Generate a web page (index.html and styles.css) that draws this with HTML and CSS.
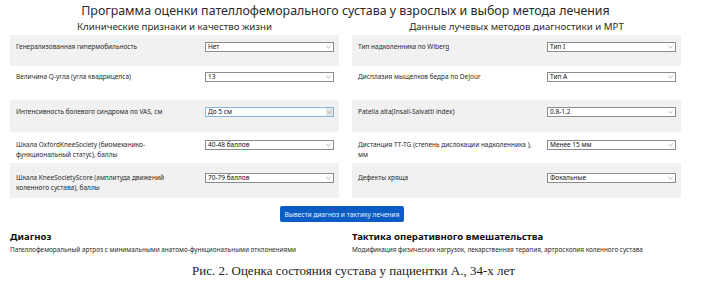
FILE: index.html
```html
<!DOCTYPE html>
<html lang="ru">
<head>
    <meta charset="UTF-8">
    <title>Программа оценки пателлофеморального сустава</title>
    <link rel="stylesheet" href="styles.css">
</head>
<body>
    <div class="app">
        <h1 class="title">Программа оценки пателлофеморального сустава у взрослых и выбор метода лечения</h1>
        <div class="columns">
            <section class="panel">
                <h2>Клинические признаки и качество жизни</h2>
                <div class="rows">
                    <div class="row">
                        <span class="label">Генерализованная гипермобильность</span>
                        <div class="select"><span>Нет</span><svg class="chev" viewBox="0 0 6 4"><path d="M0.5 0.8 L3 3.2 L5.5 0.8"/></svg></div>
                    </div>
                    <div class="row">
                        <span class="label">Величина Q-угла (угла квадрицепса)</span>
                        <div class="select"><span>13</span><svg class="chev" viewBox="0 0 6 4"><path d="M0.5 0.8 L3 3.2 L5.5 0.8"/></svg></div>
                    </div>
                    <div class="row">
                        <span class="label">Интенсивность болевого синдрома по VAS, см</span>
                        <div class="select focused"><span>До 5 см</span><span class="btn-box"><svg class="chev" viewBox="0 0 6 4"><path d="M0.5 0.8 L3 3.2 L5.5 0.8"/></svg></span></div>
                    </div>
                    <div class="row">
                        <span class="label">Шкала OxfordKneeSociety (биомеханико-функциональный статус), баллы</span>
                        <div class="select"><span>40-48 баллов</span><svg class="chev" viewBox="0 0 6 4"><path d="M0.5 0.8 L3 3.2 L5.5 0.8"/></svg></div>
                    </div>
                    <div class="row">
                        <span class="label">Шкала KneeSocietyScore (амплитуда движений коленного сустава), баллы</span>
                        <div class="select"><span>70-79 баллов</span><svg class="chev" viewBox="0 0 6 4"><path d="M0.5 0.8 L3 3.2 L5.5 0.8"/></svg></div>
                    </div>
                </div>
            </section>
            <section class="panel">
                <h2>Данные лучевых методов диагностики и МРТ</h2>
                <div class="rows">
                    <div class="row">
                        <span class="label">Тип надколенника по Wiberg</span>
                        <div class="select"><span>Тип I</span><svg class="chev" viewBox="0 0 6 4"><path d="M0.5 0.8 L3 3.2 L5.5 0.8"/></svg></div>
                    </div>
                    <div class="row">
                        <span class="label">Дисплазия мыщелков бедра по DeJour</span>
                        <div class="select"><span>Тип A</span><svg class="chev" viewBox="0 0 6 4"><path d="M0.5 0.8 L3 3.2 L5.5 0.8"/></svg></div>
                    </div>
                    <div class="row">
                        <span class="label">Patella alta(Insall-Salvatti index)</span>
                        <div class="select"><span>0.8-1.2</span><svg class="chev" viewBox="0 0 6 4"><path d="M0.5 0.8 L3 3.2 L5.5 0.8"/></svg></div>
                    </div>
                    <div class="row">
                        <span class="label">Дистанция TT-TG (степень дислокации надколенника ), мм</span>
                        <div class="select"><span>Менее 15 мм</span><svg class="chev" viewBox="0 0 6 4"><path d="M0.5 0.8 L3 3.2 L5.5 0.8"/></svg></div>
                    </div>
                    <div class="row">
                        <span class="label">Дефекты хряща</span>
                        <div class="select"><span>Фокальные</span><svg class="chev" viewBox="0 0 6 4"><path d="M0.5 0.8 L3 3.2 L5.5 0.8"/></svg></div>
                    </div>
                </div>
            </section>
        </div>
        <div class="actions">
            <button class="submit">Вывести диагноз и тактику лечения</button>
        </div>
        <div class="columns results">
            <div class="result">
                <h3>Диагноз</h3>
                <p>Пателлофеморальный артроз с минимальными анатомо-функциональными отклонениями</p>
            </div>
            <div class="result">
                <h3>Тактика оперативного вмешательства</h3>
                <p>Модификация физических нагрузок, лекарственная терапия, артроскопия коленного сустава</p>
            </div>
        </div>
    </div>
    <p class="caption">Рис. 2. Оценка состояния сустава у пациентки А., 34-х лет</p>
</body>
</html>
```
FILE: styles.css
```css
body {
    margin: 0;
    background: #fff;
    font-family: "Noto Sans", sans-serif;
    color: #222;
}

.app {
    width: 671px;
    margin-left: 10px;
}

.title {
    margin: 0;
    padding-top: 4px;
    font-size: 12.4px;
    line-height: 14px;
    font-weight: normal;
    text-align: center;
    color: #2a2a2a;
}

.columns {
    display: grid;
    grid-template-columns: 329px 329px;
    gap: 13px;
}

.panel h2 {
    margin: 0;
    padding-top: 2px;
    height: 15px;
    font-size: 9.7px;
    line-height: 14px;
    font-weight: normal;
    text-align: center;
    color: #2a2a2a;
}

.row {
    display: flex;
    align-items: flex-start;
    padding: 7px 5px 0 6px;
    box-sizing: border-box;
}

.row:nth-child(odd) {
    background: #f1f1f2;
}

.row:nth-child(1) { height: 31px; }
.row:nth-child(2) { height: 34px; padding-top: 6px; }
.row:nth-child(3) { height: 32px; }
.row:nth-child(4) { height: 31px; padding-top: 8px; }
.row:nth-child(5) { height: 35px; padding-top: 10px; }

.label {
    width: 180px;
    margin-right: 9px;
    font-size: 6.5px;
    line-height: 10px;
    color: #2a2a2a;
}

.select {
    width: 129px;
    height: 10px;
    box-sizing: border-box;
    border: 1px solid #8c8c8c;
    background: #fff;
    display: flex;
    align-items: center;
    justify-content: space-between;
    padding: 0 2px 0 2px;
    font-size: 6.5px;
    line-height: 8px;
    color: #111;
}

.select.focused {
    border-color: #86b6e2;
    padding-right: 0;
}

.btn-box {
    width: 7px;
    height: 8px;
    background: #e4e4e4;
    display: flex;
    align-items: center;
    justify-content: center;
}

.chev {
    width: 5px;
    height: 4px;
    fill: none;
    stroke: #8a8a8a;
    stroke-width: 0.8;
}

.actions {
    display: flex;
    justify-content: center;
    padding-top: 8px;
}

.submit {
    width: 124px;
    height: 16px;
    padding: 0;
    border: none;
    border-radius: 2px;
    background: #0b5cc5;
    color: #e8f3ff;
    font-family: "Noto Sans", sans-serif;
    font-size: 6.6px;
    margin-left: -7px;
}

.results {
    padding-top: 8px;
}

.result h3 {
    margin: 0;
    font-size: 9.6px;
    line-height: 13px;
    font-weight: bold;
    color: #111;
}

.result p {
    margin: 2px 0 0;
    font-size: 6.4px;
    line-height: 10px;
    color: #2a2a2a;
}

.caption {
    margin: 9px 0 0;
    text-align: center;
    font-family: "Liberation Serif", serif;
    font-size: 13px;
    line-height: 14px;
    color: #222;
}
```
